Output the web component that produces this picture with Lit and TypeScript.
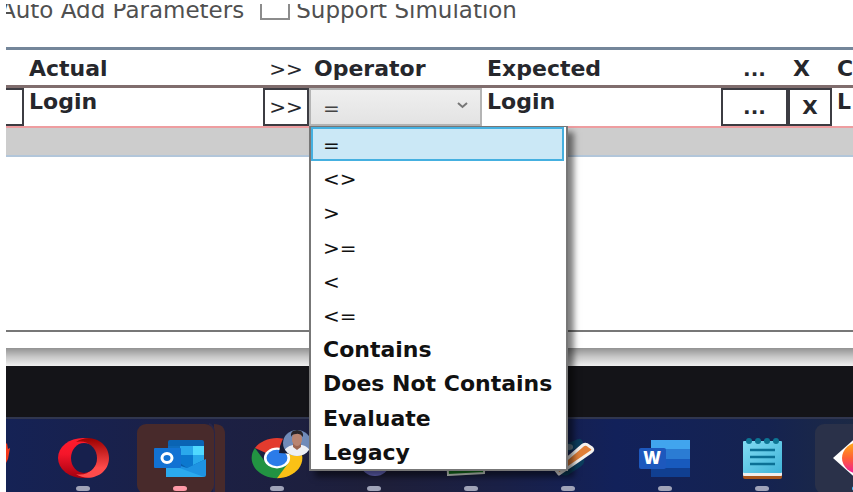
import { LitElement, html, css, svg } from "lit";
import { customElement, state } from "lit/decorators.js";

const OPERATORS = ["=", "<>", ">", ">=", "<", "<=", "Contains", "Does Not Contains", "Evaluate", "Legacy"];

@customElement("operator-picker")
class OperatorPicker extends LitElement {
  @state() private value = "=";

  static styles = css`
    :host { display: block; position: relative; height: 38px; }
    .box { position: relative; height: 100%; }
    .select {
      appearance: none; display: block; box-sizing: border-box; width: 100%; height: 100%;
      margin: 0; padding: 2px 12px 0; border: 2px solid #b4b4b4; border-radius: 0;
      background: linear-gradient(#efefef, #e3e3e3); color: #444;
      font: 20px/28px "DejaVu Sans", sans-serif;
    }
    .chevron { position: absolute; right: 13px; top: 13px; pointer-events: none; }
    .list {
      position: absolute; z-index: 2; top: 38px; left: 0; box-sizing: border-box;
      width: 259px; height: 345px; margin: 0; padding: 0 2px 0 0; list-style: none;
      display: grid; grid-auto-rows: 1fr; background: #fff; border: 2px solid #777; border-top-width: 1px;
      box-shadow: 6px 6px 6px rgba(0, 0, 0, 0.5);
    }
    .item {
      display: flex; align-items: center; padding: 2px 12px 0; white-space: nowrap; color: #111;
      font: bold 22px/28px "DejaVu Sans", sans-serif;
    }
    .symbol { font: 20px/28px "DejaVu Sans", sans-serif; }
    .chosen { background: #cbe8f6; box-shadow: inset 0 0 0 2px #45b0e0; }
  `;

  render() {
    return html`
      <div class="box">
        <select class="select" aria-label="Operator" .value=${this.value}
          @change=${(e: Event) => (this.value = (e.target as HTMLSelectElement).value)}>
          ${OPERATORS.map((o) => html`<option>${o}</option>`)}
        </select>
        <svg class="chevron" width="13" height="9" viewBox="0 0 13 9" aria-hidden="true">
          <path d="M2 2 L6.5 6 L11 2" fill="none" stroke="#777" stroke-width="2" />
        </svg>
      </div>
      <ul class="list" role="listbox" aria-label="Operators">
        ${OPERATORS.map((o) => html`<li role="option" aria-selected=${o === this.value}
          class="item ${/^[<>=]/.test(o) ? "symbol" : ""} ${o === this.value ? "chosen" : ""}"
          @click=${() => (this.value = o)}>${o}</li>`)}
      </ul>`;
  }
}

const opera = svg`
  <defs>
    <linearGradient id="op1" x1="0" y1="0" x2="0" y2="1"><stop offset="0" stop-color="#ff1b2d"/><stop offset=".4" stop-color="#f5162a"/><stop offset="1" stop-color="#a3000f"/></linearGradient>
    <linearGradient id="op2" x1="0" y1="0" x2="0" y2="1"><stop offset="0" stop-color="#9c0000"/><stop offset=".75" stop-color="#ff4b4b"/></linearGradient>
  </defs>
  <ellipse cx="49" cy="41" rx="25" ry="20" fill="url(#op1)"/>
  <path d="M42 25 C55 16 75 24 75 41 C75 58 55 66 42 57 C53 60 63 51 63 41 C63 31 53 22 42 25Z" fill="url(#op2)"/>
  <ellipse cx="50" cy="41" rx="13" ry="15" fill="#17204d"/>`;

const outlook = svg`
  <path d="M83 7 q11 0 11 10 v58 h-12z" fill="#482a2b"/>
  <path d="M83 75 V17 q0 -8 -5 -10" fill="none" stroke="#27264a" stroke-width="2"/>
  <rect x="6" y="7" width="77" height="70" rx="9" fill="#482a2b"/>
  <path d="M37 25 q0 -2 2 -2 h32 q2 0 2 2 v28 h-36z" fill="#0a64b4"/>
  <rect x="37" y="29" width="12" height="24" fill="#0f6cbd"/>
  <rect x="49" y="29" width="13" height="24" fill="#2aa8ec"/>
  <rect x="62" y="29" width="11" height="9" fill="#50d9ff"/>
  <rect x="62" y="38" width="11" height="15" fill="#28a8ea"/>
  <rect x="49" y="38" width="13" height="14" fill="#0b78cf"/>
  <path d="M49 46 L56 51 L73 43 V52 H49z" fill="#0a5fae"/>
  <path d="M35 44 L56 51 L75 42 V58 q0 2 -2 2 H37 q-2 0 -2-2z" fill="#1e93e2"/>
  <path d="M35 60 V46 L73 60z" fill="#2baaee"/>
  <rect x="23" y="31" width="27" height="20" rx="1" fill="#1272d3"/>
  <ellipse cx="36" cy="41" rx="5" ry="4.5" fill="none" stroke="#fff" stroke-width="3"/>`;

const chrome = svg`
  <g transform="translate(49 41) scale(1.26 1)">
    <path d="M0 0 L-17.5 -10 A20.3 20.3 0 0 1 17.5 -10z" fill="#e33b2e"/>
    <path d="M0 0 L17.5 -10 A20.3 20.3 0 0 1 0 20.3z" fill="#fbc116"/>
    <path d="M0 -10 H17.5 V0 H9z" fill="#fbc116"/>
    <path d="M0 20.3 A20.3 20.3 0 0 1 -17.5 -10 L-8.7 5 L9 5z" fill="#229342"/>
    <circle r="10.4" fill="#fff"/><circle r="8.3" fill="#2b7be9"/>
  </g>
  <path d="M51 36 Q52 21 62 15 L66 37z" fill="#171b33"/>
  <clipPath id="face"><ellipse cx="69" cy="26" rx="14" ry="13"/></clipPath>
  <g clip-path="url(#face)">
    <rect x="54" y="12" width="30" height="28" fill="#708bb9"/>
    <path d="M54 40 Q55 30 65 28 H74 Q83 30 84 40z" fill="#eef0f5"/>
    <path d="M65 26 h8 v4 l-4 3 l-4 -3z" fill="#9b6551"/>
    <ellipse cx="69" cy="22" rx="5" ry="7" fill="#b98470"/>
    <path d="M63 20 Q62 13 69 13 Q76 13 75 20 Q72 16 68 17 Q64 17 63 20z" fill="#2a2529"/>
  </g>`;

const teams = svg`<ellipse cx="50" cy="47" rx="14" ry="12" fill="#6f70ce"/>`;
const board = svg`<path d="M25 36 H63 L62 56 L26 58z" fill="#177a20" stroke="#dfeadd" stroke-width="2"/>`;
const pencil = svg`
  <path d="M46 51 L58 43" stroke="#0b3c5c" stroke-width="15" stroke-linecap="round"/>
  <path d="M48 31 L60 26" stroke="#0b3c5c" stroke-width="8" stroke-linecap="round"/>
  <ellipse cx="50" cy="30" rx="4" ry="3" fill="#64798a"/>
  <path d="M36 52 L64 28 Q67 26 70 29 L73 31 Q75 33 72 35 L40 57z" fill="#e07f38" stroke="#f4f1ee" stroke-width="3" stroke-linejoin="round"/>`;
const word = svg`
  <rect x="35" y="23" width="39" height="9" fill="#41a5ee"/>
  <rect x="35" y="32" width="39" height="10" fill="#2b7cd3"/>
  <rect x="35" y="42" width="39" height="9" fill="#185abd"/>
  <rect x="35" y="51" width="39" height="9" fill="#103f91"/>
  <rect x="23" y="31" width="27" height="21" rx="2" fill="#1d58bd"/>
  <text x="36" y="47" text-anchor="middle" font-family="Open Sans, sans-serif" font-weight="800" font-size="17" fill="#fff">W</text>`;
const notepad = svg`
  <defs><linearGradient id="np" x1="0" y1="0" x2="1" y2="1"><stop offset="0" stop-color="#82dcf3"/><stop offset="1" stop-color="#3fb3d8"/></linearGradient></defs>
  <rect x="30" y="30" width="39" height="32" rx="2" fill="#a9541b"/>
  <rect x="30" y="28" width="39" height="31" rx="1" fill="#f1eded"/>
  <rect x="30" y="24" width="39" height="32" rx="1" fill="url(#np)"/>
  ${[36, 45, 54, 63].map((x) => svg`<ellipse cx=${x} cy="24" rx="3" ry="3" fill="#0d7594"/>`)}
  <path d="M37 33 H62 M37 40 H62 M37 47 H62" stroke="#0b7095" stroke-width="2.5"/>`;
const diamond = svg`
  <defs><linearGradient id="dm" x1="0" y1="0" x2="0" y2="1"><stop offset="0" stop-color="#ffae16"/><stop offset=".5" stop-color="#ff6034"/><stop offset="1" stop-color="#f01a9c"/></linearGradient></defs>
  <rect x="5" y="7" width="90" height="70" rx="9" fill="#2a3149"/>
  <path d="M23 41 L50 17 L77 41 L50 65z" fill="#fff"/>
  <ellipse cx="50" cy="41" rx="18" ry="16" fill="url(#dm)"/>`;

const APPS = [
  { name: "Opera", art: opera, dot: "" },
  { name: "Outlook", art: outlook, dot: "pink" },
  { name: "Chrome", art: chrome, dot: "" },
  { name: "Teams", art: teams, dot: "" },
  { name: "Board", art: board, dot: "" },
  { name: "Editor", art: pencil, dot: "" },
  { name: "Word", art: word, dot: "" },
  { name: "Notepad", art: notepad, dot: "" },
  { name: "Studio", art: diamond, dot: "blue" },
];

@customElement("task-bar")
class TaskBar extends LitElement {
  static styles = css`
    :host { display: block; }
    .bar {
      display: flex; height: 75px; box-sizing: border-box; overflow: hidden;
      background: linear-gradient(90deg, #152255, #1c2044 24%, #1e1f3a 45%, #1a2046 58%, #12215a 72%, #152350 90%, #1c2945);
      box-shadow: inset 0 2px #30364f;
    }
    .app { flex: 0 0 97px; height: 75px; padding: 0; border: 0; background: none; }
    .edge { flex-basis: 28px; }
    .art { display: block; }
    .dot { fill: #a0a3b8; }
    .pink { fill: #ff9aa8; }
    .blue { fill: #4cc2ff; }
  `;

  render() {
    return html`<nav class="bar" aria-label="Taskbar">
      <button class="app edge" aria-label="Browser">
        <svg class="art" width="28" height="75"><path d="M0 27 L1 26 L2 32 L4 31 L2 42 L0 46z" fill="#f5381b"/></svg>
      </button>
      ${APPS.map((a) => html`<button class="app" aria-label=${a.name}>
        <svg class="art" width="97" height="75" viewBox="0 0 97 75" fill="none">
          ${a.art}<rect class="dot ${a.dot}" x="42" y="69" width="14" height="5" rx="3"/>
        </svg></button>`)}
    </nav>`;
  }
}

@customElement("app-root")
class AppRoot extends LitElement {
  static styles = css`
    :host {
      display: flex; flex-direction: column; box-sizing: border-box; min-height: 100vh;
      padding: 4px 0 0 6px; overflow: hidden; background: #fff; color: #26272c;
      font: 22px/28px "DejaVu Sans", sans-serif;
    }
    .options {
      display: flex; align-items: flex-end; height: 20px; margin-bottom: 23px; overflow: hidden;
      white-space: nowrap; color: #505050;
    }
    .lead { margin-left: -6px; margin-right: 16px; }
    .lead, .check { font-size: 23px; }
    .check { display: flex; align-items: flex-end; gap: 6px; }
    .tick {
      appearance: none; flex: none; width: 30px; height: 28px; margin: 0 0 4px; box-sizing: border-box;
      border: 2px solid #8c8c8c; background: #fff;
    }
    .panel {
      flex: 1; display: flex; flex-direction: column;
      border-top: 3px solid #74869a; border-bottom: 2px solid #777;
    }
    .grid { width: 100%; table-layout: fixed; border-collapse: separate; border-spacing: 0; font-weight: bold; }
    .c-row { width: 18px; }
    .c-actual { width: 239px; }
    .c-push { width: 46px; }
    .c-operator { width: 173px; }
    .c-expected { width: 239px; }
    .c-more { width: 67px; }
    .c-delete { width: 44px; }
    th, td { box-sizing: border-box; padding: 0; text-align: left; white-space: nowrap; }
    th { height: 38px; padding-top: 2px; border-bottom: 3px solid #806d6d; vertical-align: middle; }
    td { height: 40px; border-bottom: 2px solid #ee9da0; vertical-align: top; }
    .text { padding-left: 5px; }
    .mid { text-align: center; font-size: 20px; }
    .symbol, .cell.symbol { font: 20px/28px "DejaVu Sans", sans-serif; }
    .cell {
      display: block; box-sizing: border-box; width: 100%; height: 38px; padding: 0; margin: 0;
      border: 2px solid #3c3c42; background: #fff; color: inherit; font: inherit; font-size: 20px;
    }
    .open { border-left: 0; }
    .new { height: 27px; background: #cdcdcd; border-bottom: 2px solid #b2c6da; }
    .gap { height: 16px; }
    .fade { height: 18px; background: linear-gradient(#929292, #c8c8c8 50%, #f0f0f0); }
    .desk { height: 51px; background: #141418; }
  `;

  render() {
    return html`
      <div class="options">
        <span class="lead">Auto Add Parameters</span>
        <label class="check"><input class="tick" type="checkbox">Support Simulation</label>
      </div>
      <section class="panel">
        <table class="grid">
          <colgroup>
            <col class="c-row"><col class="c-actual"><col class="c-push"><col class="c-operator">
            <col class="c-expected"><col class="c-more"><col class="c-delete"><col>
          </colgroup>
          <thead>
            <tr>
              <th></th><th class="text">Actual</th><th class="symbol mid">&gt;&gt;</th><th class="text">Operator</th>
              <th class="text">Expected</th><th class="mid">...</th><th class="text">X</th><th class="text">C</th>
            </tr>
          </thead>
          <tbody>
            <tr>
              <td><button class="cell open" aria-label="Row"></button></td>
              <td class="text">Login</td>
              <td><button class="cell symbol">&gt;&gt;</button></td>
              <td><operator-picker></operator-picker></td>
              <td class="text">Login</td>
              <td><button class="cell">...</button></td>
              <td><button class="cell">X</button></td>
              <td class="text">L</td>
            </tr>
          </tbody>
        </table>
        <div class="new"></div>
      </section>
      <div class="gap"></div>
      <div class="fade"></div>
      <div class="desk"></div>
      <task-bar></task-bar>`;
  }
}
